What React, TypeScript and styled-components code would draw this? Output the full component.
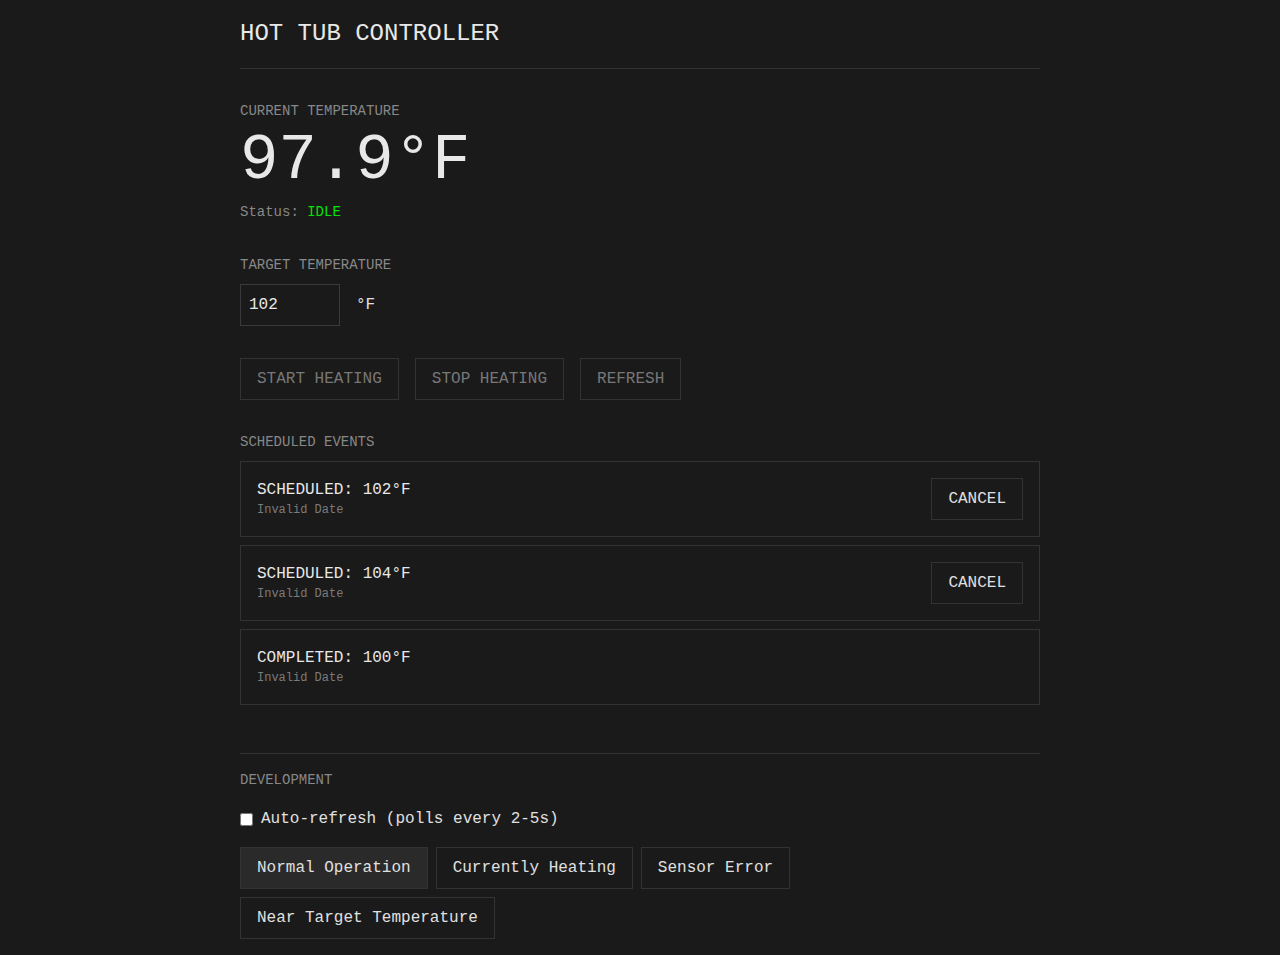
import React, { useState } from "react";
import styled, { createGlobalStyle } from "styled-components";

const GlobalStyle = createGlobalStyle`
  html, body {
    margin: 0;
    padding: 0;
    background: #1a1a1a;
  }
  body {
    font-family: "Liberation Mono", "DejaVu Sans Mono", monospace;
    color: #e0e0e0;
  }
  * { box-sizing: border-box; }
`;

const Container = styled.div`
  max-width: 800px;
  margin: 0 auto;
  padding: 20px 0 40px;
`;

const Header = styled.header`
  padding-bottom: 20px;
  border-bottom: 1px solid #333;
  margin-bottom: 32px;
`;

const Title = styled.h1`
  margin: 0;
  font-size: 24px;
  line-height: 28px;
  font-weight: normal;
  color: #e8e8e8;
`;

const Section = styled.section<{ $gap?: number }>`
  margin-bottom: ${(p) => p.$gap ?? 32}px;
`;

const Label = styled.div<{ $mb?: number }>`
  font-size: 14px;
  line-height: 20px;
  color: #888;
  margin-bottom: ${(p) => p.$mb ?? 8}px;
`;

const BigTemp = styled.div`
  font-size: 64px;
  line-height: 64px;
  color: #e8e8e8;
`;

const Status = styled.div`
  margin-top: 9px;
  padding-bottom: 1px;
  font-size: 14px;
  line-height: 20px;
  color: #888;
`;

const StatusValue = styled.span<{ $color: string }>`
  color: ${(p) => p.$color};
`;

const InputRow = styled.div`
  display: flex;
  align-items: center;
  gap: 16px;
`;

const TempInput = styled.input`
  width: 100px;
  height: 42px;
  padding: 10px 8px;
  background: #1a1a1a;
  border: 1px solid #3a3a3a;
  color: #e8e8e8;
  font-family: inherit;
  font-size: 16px;
  line-height: 20px;
  outline: none;
`;

const Unit = styled.span`
  font-size: 16px;
  color: #e0e0e0;
`;

const ButtonRow = styled.div`
  display: flex;
  gap: 16px;
`;

const Button = styled.button<{ $active?: boolean }>`
  font-family: inherit;
  font-size: 16px;
  line-height: 20px;
  padding: 10px 16px;
  border: 1px solid #333;
  background: ${(p) => (p.$active ? "#2a2a2a" : "#1a1a1a")};
  color: #e0e0e0;
  cursor: pointer;
  &:disabled {
    color: #777;
    cursor: default;
  }
`;

const EventList = styled.div`
  display: flex;
  flex-direction: column;
  gap: 8px;
`;

const EventCard = styled.div`
  display: flex;
  align-items: center;
  justify-content: space-between;
  min-height: 76px;
  padding: 16px;
  border: 1px solid #333;
`;

const EventInfo = styled.div`
  display: flex;
  flex-direction: column;
`;

const EventTitle = styled.div`
  font-size: 16px;
  line-height: 20px;
  color: #e8e8e8;
`;

const EventDate = styled.div`
  margin-top: 2px;
  font-size: 12px;
  line-height: 16px;
  color: #7a7a7a;
`;

const DevSection = styled.section`
  margin-top: 48px;
  padding-top: 16px;
  border-top: 1px solid #333;
`;

const CheckRow = styled.label`
  display: flex;
  align-items: flex-start;
  height: 24px;
  margin-bottom: 16px;
  font-size: 16px;
  line-height: 24px;
  color: #e0e0e0;
`;

const Checkbox = styled.input`
  width: 13px;
  height: 13px;
  margin: 6px 8px 0 0;
`;

const DevButtons = styled.div`
  display: flex;
  flex-wrap: wrap;
`;

const DevButton = styled(Button)`
  margin: 0 8px 8px 0;
`;

const events = [
  { kind: "SCHEDULED", temp: 102, cancel: true },
  { kind: "SCHEDULED", temp: 104, cancel: true },
  { kind: "COMPLETED", temp: 100, cancel: false },
];

const scenarios = [
  "Normal Operation",
  "Currently Heating",
  "Sensor Error",
  "Near Target Temperature",
];

export default function App() {
  const [target, setTarget] = useState("102");
  const [scenario, setScenario] = useState(0);
  const [auto, setAuto] = useState(false);

  return (
    <>
      <GlobalStyle />
      <Container>
        <Header>
          <Title>HOT TUB CONTROLLER</Title>
        </Header>

        <Section>
          <Label>CURRENT TEMPERATURE</Label>
          <BigTemp>97.9°F</BigTemp>
          <Status>
            Status: <StatusValue $color="#00e600">IDLE</StatusValue>
          </Status>
        </Section>

        <Section>
          <Label $mb={9}>TARGET TEMPERATURE</Label>
          <InputRow>
            <TempInput
              type="text"
              value={target}
              onChange={(e) => setTarget(e.target.value)}
            />
            <Unit>°F</Unit>
          </InputRow>
        </Section>

        <Section>
          <ButtonRow>
            <Button disabled>START HEATING</Button>
            <Button disabled>STOP HEATING</Button>
            <Button disabled>REFRESH</Button>
          </ButtonRow>
        </Section>

        <Section $gap={0}>
          <Label $mb={9}>SCHEDULED EVENTS</Label>
          <EventList>
            {events.map((ev, i) => (
              <EventCard key={i}>
                <EventInfo>
                  <EventTitle>
                    {ev.kind}: {ev.temp}°F
                  </EventTitle>
                  <EventDate>Invalid Date</EventDate>
                </EventInfo>
                {ev.cancel && <Button>CANCEL</Button>}
              </EventCard>
            ))}
          </EventList>
        </Section>

        <DevSection>
          <Label $mb={17}>DEVELOPMENT</Label>
          <CheckRow>
            <Checkbox
              type="checkbox"
              checked={auto}
              onChange={(e) => setAuto(e.target.checked)}
            />
            Auto-refresh (polls every 2-5s)
          </CheckRow>
          <DevButtons>
            {scenarios.map((s, i) => (
              <DevButton
                key={s}
                $active={scenario === i}
                onClick={() => setScenario(i)}
              >
                {s}
              </DevButton>
            ))}
          </DevButtons>
        </DevSection>
      </Container>
    </>
  );
}
